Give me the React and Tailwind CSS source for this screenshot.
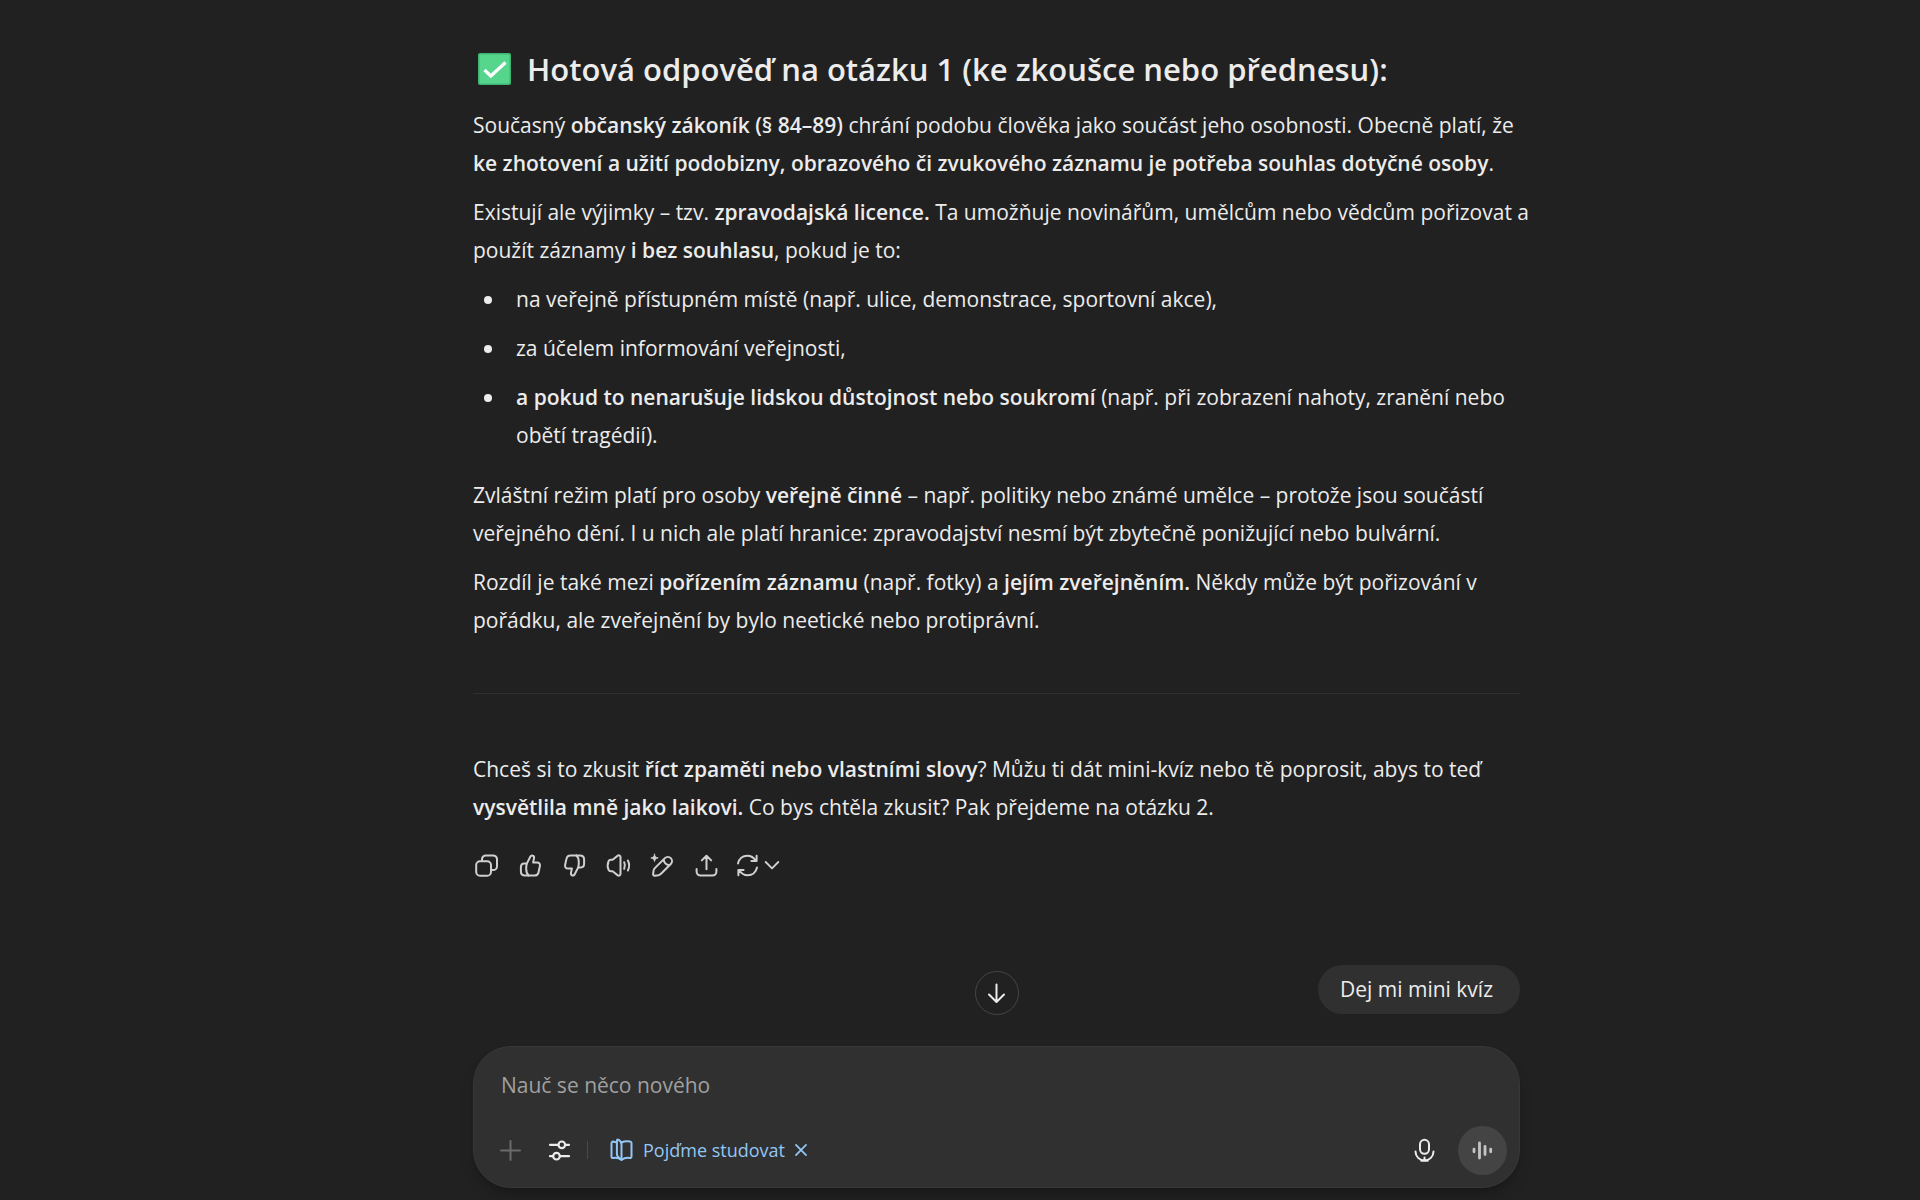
import React, { useState } from 'react';

const Icon = ({ children, className = 'size-[27px]', strokeWidth = 2 }) => (
  <svg
    viewBox="0 0 27 27"
    className={className}
    fill="none"
    stroke="currentColor"
    strokeWidth={strokeWidth}
    strokeLinecap="round"
    strokeLinejoin="round"
    aria-hidden="true"
  >
    {children}
  </svg>
);

const ThumbPath = () => (
  <>
    <path d="M9.8 11.6 13.3 4.8c.6-1.2 1.3-1.6 2.2-1.3 1.3.4 1.8 1.5 1.5 2.9l-.9 4h3.8c2.2 0 3.4 1.6 3 3.6l-1.3 6c-.4 2.1-1.9 3.6-4.1 3.6H8c-2.6 0-4.1-1.6-4.1-4v-4.100c0-2.300 1.300-3.900 3.300-3.900z" />
    <path d="M9.8 11.6c-.5 1.8-.6 3.2-.6 5.2 0 3 .3 5 2.4 6.8" />
  </>
);

const actions = [
  {
    label: 'Kopírovat',
    icon: (
      <>
        <rect x="3.2" y="9.3" width="14.8" height="14.4" rx="3.8" />
        <path d="M9 8.8V7.3a3.9 3.9 0 0 1 3.9-3.9h7.2A3.9 3.9 0 0 1 24 7.3v6.9a3.9 3.9 0 0 1-3.9 3.9h-1.7" />
      </>
    ),
  },
  { label: 'Dobrá odpověď', icon: <ThumbPath /> },
  { label: 'Špatná odpověď', icon: <g transform="rotate(180 13.5 13.5)"><ThumbPath /></g> },
  {
    label: 'Přečíst nahlas',
    icon: (
      <>
        <path d="M12.8 3.6c1.4-.7 2.7.2 2.7 1.6v16.6c0 1.4-1.3 2.3-2.7 1.6l-5.2-4.1H5.7c-1 0-1.7-.5-2.1-1.4-1.2-2.8-1.2-6 0-8.8.4-.9 1.1-1.4 2.1-1.4h1.9z" />
        <path d="M19.2 10.2c.9 2.1.9 4.5 0 6.6M22.9 8.5c1.6 3.2 1.6 6.8 0 10" />
      </>
    ),
  },
  {
    label: 'Upravit',
    icon: (
      <>
        <path d="m6.1 15.9 9.8-9.8a4.2 4.2 0 0 1 5.9 0 4.2 4.2 0 0 1 0 5.9L12 21.8c-.8.8-1.5 1.2-2.6 1.4l-3.7.5c-1 .1-1.7-.6-1.6-1.5l.5-3.8c.2-1 .7-1.7 1.5-2.5zM14.6 7.4c.4 3.2 2.7 5.5 5.9 5.9" />
        <path fill="currentColor" strokeWidth=".8" d="M5.5 2.2c.5 2.5 1.200 3.200 3.700 3.700-2.500.5-3.200 1.200-3.700 3.700-.5-2.500-1.200-3.200-3.700-3.700 2.500-.5 3.200-1.200 3.700-3.700z" />
      </>
    ),
  },
  {
    label: 'Sdílet',
    icon: (
      <path d="M3.6 17v2.6a4 4 0 0 0 4 4h11.8a4 4 0 0 0 4-4V17M13.5 17.2V4M8.8 8.4l4.700-4.700 4.700 4.700" />
    ),
  },
];

const ActionButton = ({ label, children }) => (
  <button
    type="button"
    aria-label={label}
    className="w-11 h-11 flex items-center justify-center rounded-xl hover:bg-white/10"
  >
    {children}
  </button>
);

const B = ({ children }) => <strong className="font-semibold">{children}</strong>;

const Bullet = ({ children }) => (
  <li className="flex">
    <span className="w-[43px] shrink-0 pl-[11px] pt-4">
      <span className="block size-2 rounded-full bg-current" />
    </span>
    <p>{children}</p>
  </li>
);

const Answer = () => (
  <article className="text-[21px] leading-[38px]">
    <h2 className="flex items-center gap-4 pl-[5px] text-[31px] leading-10 font-semibold">
      <svg viewBox="0 0 33 32" className="w-[33px] h-8 shrink-0" role="img" aria-label="Hotovo">
        <rect width="33" height="32" rx="2" fill="#3fb573" />
        <rect x="1.5" y="1.5" width="30" height="29" rx="1" fill="#56d68c" />
        <path d="m6.5 17 6.3 6L27.5 9.5" fill="none" stroke="#fff" strokeWidth="3.2" />
      </svg>
      Hotová odpověď na otázku 1 (ke zkoušce nebo přednesu):
    </h2>

    <p className="mt-[17px]">
      Současný <B>občanský zákoník (§ 84–89)</B> chrání podobu člověka jako součást jeho osobnosti. Obecně platí, že{' '}
      <B>ke zhotovení a užití podobizny, obrazového či zvukového záznamu je potřeba souhlas dotyčné osoby</B>.
    </p>
    <p className="mt-[11px] -mr-4">
      Existují ale výjimky – tzv. <B>zpravodajská licence.</B> Ta umožňuje novinářům, umělcům nebo vědcům pořizovat a
      použít záznamy <B>i bez souhlasu</B>, pokud je to:
    </p>

    <ul className="mt-[11px] space-y-[11px]">
      <Bullet>na veřejně přístupném místě (např. ulice, demonstrace, sportovní akce),</Bullet>
      <Bullet>za účelem informování veřejnosti,</Bullet>
      <Bullet>
        <B>a pokud to nenarušuje lidskou důstojnost nebo soukromí</B> (např. při zobrazení nahoty, zranění nebo obětí
        tragédií).
      </Bullet>
    </ul>

    <p className="mt-[22px]">
      Zvláštní režim platí pro osoby <B>veřejně činné</B> – např. politiky nebo známé umělce – protože jsou součástí
      veřejného dění. I u nich ale platí hranice: zpravodajství nesmí být zbytečně ponižující nebo bulvární.
    </p>
    <p className="mt-[11px]">
      Rozdíl je také mezi <B>pořízením záznamu</B> (např. fotky) a <B>jejím zveřejněním.</B> Někdy může být pořizování v
      pořádku, ale zveřejnění by bylo neetické nebo protiprávní.
    </p>

    <hr className="mt-[54px] mb-14 border-[#303030]" />

    <p>
      Chceš si to zkusit <B>říct zpaměti nebo vlastními slovy</B>? Můžu ti dát mini-kvíz nebo tě poprosit, abys to teď{' '}
      <B>vysvětlila mně jako laikovi.</B> Co bys chtěla zkusit? Pak přejdeme na otázku 2.
    </p>
  </article>
);

const Composer = () => {
  const [text, setText] = useState('');
  const [studying, setStudying] = useState(true);

  return (
    <form
      onSubmit={(e) => e.preventDefault()}
      className="relative mt-8 rounded-[38px] bg-[#303030] border border-[#383838] shadow-lg shadow-black/20 pt-5 pb-3 pl-[27px] pr-3"
    >
      <button
        type="button"
        aria-label="Přejít dolů"
        className="absolute bottom-full left-1/2 -translate-x-1/2 mb-8 size-11 rounded-full border border-[#454545] bg-[#212121] flex items-center justify-center"
      >
        <Icon>
          <path d="M13.5 4.5v17M6 14.500l7.500 7.500 7.500-7.500" />
        </Icon>
      </button>

      <input
        type="text"
        aria-label="Zpráva"
        value={text}
        onChange={(e) => setText(e.target.value)}
        placeholder="Nauč se něco nového"
        className="block w-full h-9 bg-transparent text-[21px] placeholder:text-[#a0a0a0] outline-none"
      />

      <div className="mt-[22px] flex items-center h-[50px]">
        <button type="button" aria-label="Přidat" className="-ml-1 text-[#6b6b6b]">
          <Icon>
            <path d="M13.5 4v19M4 13.5h19" />
          </Icon>
        </button>
        <button type="button" aria-label="Nástroje" className="ml-[22px]">
          <Icon strokeWidth={2.2}>
            <path d="M4 7.8h8.3M19.3 7.8H23M4 19.2h3M14 19.2h9" />
            <circle cx="15.8" cy="7.8" r="3.3" />
            <circle cx="10.5" cy="19.2" r="3.3" />
          </Icon>
        </button>
        <span className="ml-[14px] w-px h-[18px] bg-[#4a4a4a]" />
        {studying && (
          <div className="ml-5 flex items-center text-[#93c6f4]">
            <Icon>
              <path d="M13.5 5.5c2.8-1.5 5.6-1.6 8.6-1 .9.2 1.4.7 1.4 1.6v13.3c0 1.2-.8 1.8-2 1.6-2.8-.4-5.4 0-8 1.9-2.6-1.9-5.2-2.3-8-1.9-1.2.2-2-.4-2-1.6V6.100c0-.9.5-1.400 1.400-1.600" />
              <path d="M13.5 22.500c-2.500-1.400-4.600-3-4.600-5.500V3.500c0-.9.8-1.300 1.500-.8 2 1.300 3.100 2.500 3.100 4.300z" />
              <path d="M8.500 5.500c-1.200-.8-3-.9-3.600-.8" />
            </Icon>
            <span className="ml-2 text-lg leading-7">Pojďme studovat</span>
            <button type="button" aria-label="Zrušit studijní režim" onClick={() => setStudying(false)} className="ml-2">
              <Icon className="size-4" strokeWidth={3}>
                <path d="m5 5 17 17M22 5 5 22" />
              </Icon>
            </button>
          </div>
        )}

        <div className="ml-auto flex items-center gap-5">
          <button type="button" aria-label="Diktovat">
            <Icon>
              <rect x="9" y="2.800" width="9" height="14" rx="4.500" />
              <path d="M4.500 14.500a9 9 0 0 0 18 0M13.500 20.600v3M10.300 23.800h6.400" />
            </Icon>
          </button>
          <button
            type="submit"
            aria-label="Hlasový režim"
            className="size-[49px] rounded-full bg-[#444444] text-[#c4c4c4] flex items-center justify-center"
          >
            <Icon strokeWidth={2.8}>
              <path d="M5 12.200v2.600M10.500 6v15M16 9.500v8M21.700 12.200v2.600" />
            </Icon>
          </button>
        </div>
      </div>
    </form>
  );
};

export default function App() {
  return (
    <div className="min-h-screen bg-[#212121] text-[#ececec] pl-[73px] [font-family:'Open_Sans','Noto_Sans',sans-serif]">
      <main className="max-w-[1047px] mx-auto pt-[49px] pb-3">
        <Answer />

        <div className="mt-[17px] -ml-[9px] flex items-center text-[#d0d0d0]">
          {actions.map((a) => (
            <ActionButton key={a.label} label={a.label}>
              <Icon>{a.icon}</Icon>
            </ActionButton>
          ))}
          <button type="button" aria-label="Zkusit znovu" className="h-11 pl-[6px] flex items-center gap-[2px]">
            <Icon>
              <path d="M4 11.500C5 6.800 8.700 3.700 13.300 3.700c3.600 0 6.400 1.700 8.400 5M22.600 3.700v5.200h-5.200M23 15.500c-1 4.700-4.700 7.800-9.300 7.800-3.600 0-6.400-1.700-8.400-5M4.400 23.300v-5.200h5.200" />
            </Icon>
            <Icon className="size-[18px]" strokeWidth={2.8}>
              <path d="m4 9 9.500 9.500L23 9" />
            </Icon>
          </button>
        </div>

        <div className="mt-[78px] flex justify-end">
          <div className="rounded-full bg-[#303030] py-[6px] pl-[22px] pr-[27px] text-[21px] leading-[37px]">
            Dej mi mini kvíz
          </div>
        </div>

        <Composer />
      </main>
    </div>
  );
}
